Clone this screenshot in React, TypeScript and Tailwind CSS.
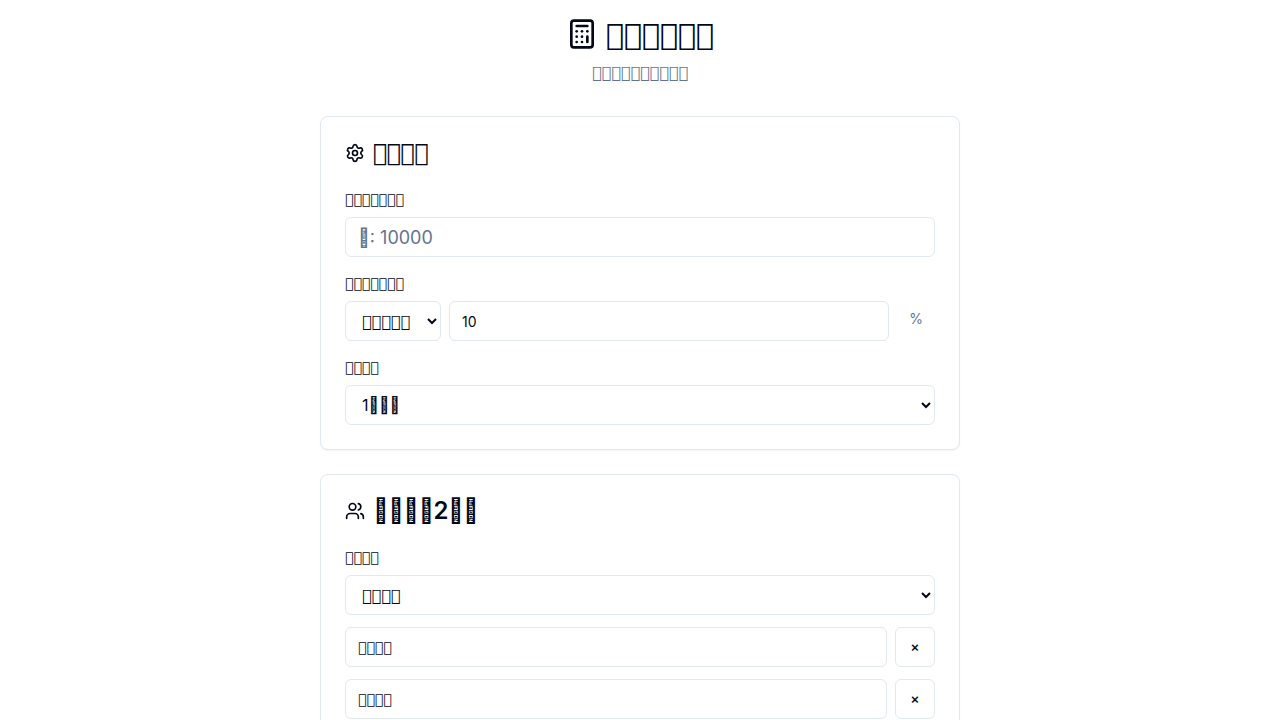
import { useState } from "react";
import { Calculator, Settings, Users } from "lucide-react";

const glyphs = (count: number) => "\uE5A3".repeat(count);

const boxFont = "font-['DejaVu_Sans',sans-serif]";
const field = "h-10 w-full rounded-md border border-slate-200 bg-white px-3 py-2 outline-none focus:ring-2 focus:ring-slate-400";
const card = "rounded-lg border border-slate-200 bg-white p-6 shadow-xs";
const cardTitle = "flex h-6 items-center gap-2 text-2xl leading-6 font-semibold tracking-tight";
const labelStyle = "flex h-5 items-center font-['DejaVu_Sans',sans-serif] text-sm font-medium";

export default function App() {
  const [rate, setRate] = useState("10");
  const [members, setMembers] = useState([glyphs(4), glyphs(4)]);

  return (
    <div className="min-h-screen bg-white p-4 font-['Inter',sans-serif] text-[#020817]">
      <main className="mx-auto flex max-w-[640px] flex-col gap-6">
        <header className="flex flex-col items-center gap-2 pb-2">
          <h1 className="flex h-9 items-center gap-2 text-3xl font-bold">
            <Calculator className="size-8" />
            <span>
              <span className={boxFont}>{glyphs(6)}</span>
            </span>
          </h1>
          <p className="h-6 text-slate-500">
            <span className={boxFont}>{glyphs(10)}</span>
          </p>
        </header>

        <section className={card}>
          <h2 className={cardTitle}>
            <Settings className="size-5" />
            <span className={`font-normal ${boxFont}`}>{glyphs(4)}</span>
          </h2>
          <div className="mt-6 flex flex-col gap-4">
            <div className="flex flex-col gap-2">
              <label htmlFor="amount" className={labelStyle}>{glyphs(7)}</label>
              <input id="amount" className={`${field} text-lg placeholder:text-slate-500`} placeholder={`${glyphs(1)}: 10000`} />
            </div>
            <div className="flex flex-col gap-2">
              <label htmlFor="rate" className={labelStyle}>{glyphs(7)}</label>
              <div className="flex gap-2">
                <select aria-label={glyphs(5)} className={`h-10 w-24 shrink-0 rounded-md border border-slate-200 bg-white px-3 py-2 ${boxFont}`}>
                  <option>{glyphs(5)}</option>
                </select>
                <input id="rate" className={`${field} text-sm`} value={rate} onChange={(e) => setRate(e.target.value)} />
                <span className="flex h-9 shrink-0 items-center px-3 text-sm text-slate-500">%</span>
              </div>
            </div>
            <div className="flex flex-col gap-2">
              <label htmlFor="rounding" className={labelStyle}>{glyphs(4)}</label>
              <select id="rounding" className={field}>
                <option>{`1${glyphs(3)}`}</option>
              </select>
            </div>
          </div>
        </section>

        <section className={card}>
          <h2 className={cardTitle}>
            <Users className="size-5" />
            {`${glyphs(4)}2${glyphs(2)}`}
          </h2>
          <div className="mt-6 flex flex-col gap-3">
            <div className="flex flex-col gap-2">
              <label htmlFor="split" className={labelStyle}>{glyphs(4)}</label>
              <select id="split" className={`${field} ${boxFont}`}>
                <option>{glyphs(4)}</option>
              </select>
            </div>
            {members.map((name, i) => (
              <div key={i} className="flex gap-2">
                <input
                  aria-label={glyphs(4)}
                  className={`${field} text-sm ${boxFont}`}
                  value={name}
                  onChange={(e) => setMembers(members.map((m, j) => (j === i ? e.target.value : m)))}
                />
                <button
                  type="button"
                  className="size-10 shrink-0 rounded-md border border-slate-200 bg-white text-sm font-medium hover:bg-slate-100"
                  onClick={() => setMembers(members.filter((_, j) => j !== i))}
                >
                  ×
                </button>
              </div>
            ))}
          </div>
        </section>
      </main>
    </div>
  );
}
